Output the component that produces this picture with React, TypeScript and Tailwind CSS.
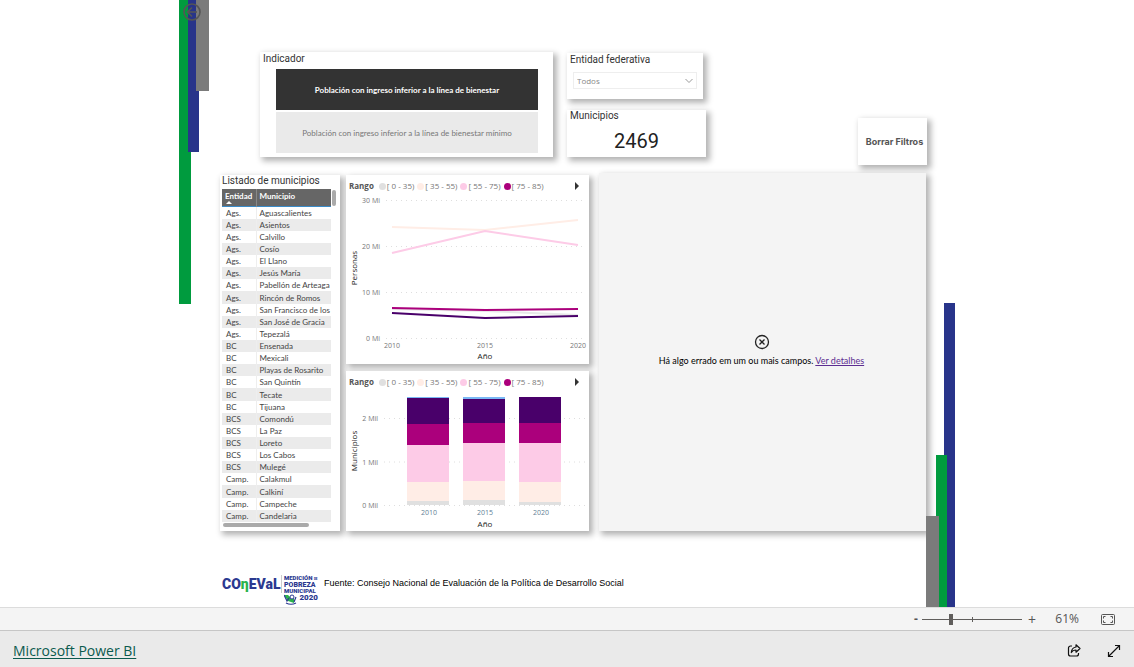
import { useState } from "react";

const MUNICIPIOS: [string, string][] = [
  ["Ags.", "Aguascalientes"],
  ["Ags.", "Asientos"],
  ["Ags.", "Calvillo"],
  ["Ags.", "Cosío"],
  ["Ags.", "El Llano"],
  ["Ags.", "Jesús María"],
  ["Ags.", "Pabellón de Arteaga"],
  ["Ags.", "Rincón de Romos"],
  ["Ags.", "San Francisco de los"],
  ["Ags.", "San José de Gracia"],
  ["Ags.", "Tepezalá"],
  ["BC", "Ensenada"],
  ["BC", "Mexicali"],
  ["BC", "Playas de Rosarito"],
  ["BC", "San Quintín"],
  ["BC", "Tecate"],
  ["BC", "Tijuana"],
  ["BCS", "Comondú"],
  ["BCS", "La Paz"],
  ["BCS", "Loreto"],
  ["BCS", "Los Cabos"],
  ["BCS", "Mulegé"],
  ["Camp.", "Calakmul"],
  ["Camp.", "Calkiní"],
  ["Camp.", "Campeche"],
  ["Camp.", "Candelaria"],
];

const RANGES = [
  { label: "[ 0 - 35)", dot: "bg-[#e0e0e0]" },
  { label: "[ 35 - 55)", dot: "bg-[#ffede6]" },
  { label: "[ 55 - 75)", dot: "bg-[#fdcbe7]" },
  { label: "[ 75 - 85)", dot: "bg-[#ab007c]" },
];

const LINES = [
  { color: "#e8e8e8", points: "46,112 139,114 232,118" },
  { color: "#ffede6", points: "46,30 139,33 232,23" },
  { color: "#fdcbe7", points: "46,56 139,34 232,48" },
  { color: "#ab007c", points: "46,111 139,113 232,112" },
  { color: "#49006a", points: "46,116 139,121 232,119" },
];

const BAR_COLORS = ["#7ab8f5", "#49006a", "#ab007c", "#fdcbe7", "#ffede6", "#e0e0e0"];

// edges of each stacked segment, top to bottom
const BARS = [
  { year: "2010", x: 61, edges: [4, 5, 31, 52, 89, 108, 112] },
  { year: "2015", x: 117, edges: [4, 6, 30, 50, 88, 107, 112] },
  { year: "2020", x: 173, edges: [4, 4, 30, 50, 89, 109, 112] },
];

const CARD = "bg-white shadow-[3px_3px_6px_1px_rgba(0,0,0,0.3)]";

function Legend() {
  return (
    <div className="flex h-[22px] items-center pl-[3px] pr-[10px] text-[8px] leading-none text-[#777]">
      <span className="mr-[5px] font-bold text-[#555]">Rango</span>
      <ul className="flex gap-[3px]">
        {RANGES.map((r) => (
          <li key={r.label} className="flex items-center gap-px whitespace-nowrap">
            <span className={`size-[7px] rounded-full ${r.dot}`} />
            {r.label}
          </li>
        ))}
      </ul>
      <button
        type="button"
        aria-label="Siguiente"
        className="ml-auto border-y-4 border-l-4 border-y-transparent border-l-[#333]"
      />
    </div>
  );
}

function GridLine({ y, x }: { y: number; x: number }) {
  return <line x1={x} x2={239} y1={y} y2={y} stroke="#dedede" strokeDasharray="1 4" />;
}

function LineChart() {
  return (
    <svg width="243" height="167" className="block text-[7px]" fill="#777" role="img" aria-label="Personas por año">
      {[30, 20, 10, 0].map((n, i) => (
        <g key={n}>
          <GridLine x={40} y={3.5 + i * 46} />
          <text x={34} y={6 + i * 46} textAnchor="end">{n} Mi</text>
        </g>
      ))}
      {LINES.map((l) => (
        <polyline key={l.color} points={l.points} fill="none" stroke={l.color} strokeWidth={2} />
      ))}
      {["2010", "2015", "2020"].map((y, i) => (
        <text key={y} x={46 + i * 93} y={151} textAnchor="middle">{y}</text>
      ))}
      <g className="text-[8px]" fill="#222" textAnchor="middle">
        <text x={139} y={162}>Año</text>
        <text transform="translate(11 71) rotate(-90)">Personas</text>
      </g>
    </svg>
  );
}

function BarChart() {
  return (
    <svg width="243" height="138" className="block text-[7px]" fill="#777" role="img" aria-label="Municipios por año">
      {[2, 1, 0].map((n, i) => (
        <g key={n}>
          <GridLine x={38} y={25.5 + i * 43.5} />
          <text x={32} y={28 + i * 43.5} textAnchor="end">{n} Mil</text>
        </g>
      ))}
      {BARS.map((b) => (
        <g key={b.year}>
          {BAR_COLORS.map((c, i) => (
            <rect key={c} x={b.x} y={b.edges[i]} width={42} height={b.edges[i + 1] - b.edges[i]} fill={c} />
          ))}
          <text x={b.x + 22} y={122} textAnchor="middle" fill="#5f7f96">{b.year}</text>
        </g>
      ))}
      <g className="text-[8px]" fill="#222" textAnchor="middle">
        <text x={139} y={134}>Año</text>
        <text transform="translate(11 58) rotate(-90)">Municipios</text>
      </g>
    </svg>
  );
}

function MunicipiosTable() {
  return (
    <section className={`w-[120px] shrink-0 pl-[2px] ${CARD}`}>
      <h2 className="h-[14px] whitespace-nowrap font-[Roboto,sans-serif] text-[10px] leading-[12px] text-[#333]">
        Listado de municipios
      </h2>
      <div className="flex gap-px">
        <table className="h-[333px] w-[109px] table-fixed text-left font-[Lato,sans-serif] text-[8px] leading-[10px] text-[#444]">
          <thead>
            <tr className="h-[17px] border-b border-[#3a8bc8] bg-[#666] align-top text-white">
              <th className="w-[34px] border-r border-[#888] pl-[3px] font-bold">
                <div className="pt-[3px] leading-[9px]">Entidad</div>
                <span className="ml-px block w-0 border-x-[3px] border-b-[3px] border-x-transparent border-b-white" />
              </th>
              <th className="pl-[3px] font-bold">
                <div className="pt-[3px] leading-[9px]">Municipio</div>
              </th>
            </tr>
          </thead>
          <tbody>
            {MUNICIPIOS.map(([entidad, municipio]) => (
              <tr key={municipio} className="even:bg-[#ebebeb]">
                <td className="border-r border-[#eee] pl-1">{entidad}</td>
                <td className="overflow-hidden whitespace-nowrap pl-[3px]">{municipio}</td>
              </tr>
            ))}
          </tbody>
        </table>
        <div className="mt-px h-4 w-1 rounded-sm bg-[#aaa]" />
      </div>
      <div className="ml-px mt-px h-1 w-[86px] rounded-sm bg-[#aaa]" />
    </section>
  );
}

function Logo() {
  return (
    <div className="flex items-start gap-[2px] font-[Roboto,sans-serif] font-black text-[#2b3990]">
      <div className="w-[57px] whitespace-nowrap pt-px text-[14px] leading-4">
        CO<span className="text-[#2bb34a]">η</span>EVaL
      </div>
      <div className="h-[18px] w-px bg-[#ccc]" />
      <div className="w-[34px] text-[6px] leading-[6px]">
        <div className="whitespace-nowrap">MEDICIÓN <span className="text-[3px]">DE</span></div>
        <div className="text-[7px]">POBREZA</div>
        <div>MUNICIPAL</div>
        <div className="flex items-start justify-between text-[8px] leading-[8px]">
          <svg width="14" height="11" viewBox="0 0 14 11" fill="none">
            <path d="M0 1H4L8 5L10 3L10 9L4 7Z" fill="#2bb34a" />
            <circle cx="8" cy="3" r="2" fill="#fff" stroke="#2b3990" />
            <path d="M0 1L3 7L5 4M12 3L10 8M2 9c3 1.500 7 1.500 10 0" stroke="#2b3990" strokeWidth="1.2" />
          </svg>
          2020
        </div>
      </div>
    </div>
  );
}

function ReportPage() {
  const [indicator, setIndicator] = useState(0);

  return (
    <div className="relative flex w-full max-w-[776px]">
      <div className="flex shrink-0 items-start">
        <div className="h-[304px] w-3 bg-[#009b3e]" />
        <div className="-ml-[3px] h-[152px] w-[11px] bg-[#28348a]" />
        <div className="-ml-[3px] h-[91px] w-[13px] bg-[#7b7b7b]" />
      </div>
      <button type="button" aria-label="Volver" className="absolute left-[4px] top-[3px] text-[#555]">
        <svg width="18" height="18" viewBox="0 0 18 18" fill="none" stroke="currentColor" strokeWidth="1.6">
          <circle cx="9" cy="9" r="8" />
          <path d="M14 9H4.500M9 4.500L4.500 9L9 13.500" />
        </svg>
      </button>

      <div className="flex min-w-0 flex-1 flex-col pl-[11px] pt-[52px]">
        <div className="flex items-start pl-10">
          <section className={`h-[105px] w-[293px] pl-[3px] ${CARD}`}>
            <h2 className="h-[17px] font-[Roboto,sans-serif] text-[10px] leading-[14px] text-[#333]">Indicador</h2>
            <div className="flex flex-col gap-[2px] pl-[13px] pr-[15px] font-[Lato,sans-serif] text-[8px]">
              {[
                "Población con ingreso inferior a la línea de bienestar",
                "Población con ingreso inferior a la línea de bienestar mínimo",
              ].map((label, i) => (
                <button
                  key={label}
                  type="button"
                  aria-pressed={indicator === i}
                  onClick={() => setIndicator(i)}
                  className={
                    indicator === i
                      ? "h-[41px] bg-[#333] font-bold text-white"
                      : "h-[41px] bg-[#eaeaea] text-[#777]"
                  }
                >
                  {label}
                </button>
              ))}
            </div>
          </section>

          <div className="ml-[14px] flex flex-col items-start gap-[11px] pt-px">
            <section className={`h-[46px] w-[136px] pl-[3px] ${CARD}`}>
              <label htmlFor="entidad" className="block h-[19px] font-[Roboto,sans-serif] text-[10px] leading-[14px] text-[#333]">
                Entidad federativa
              </label>
              <div className="relative ml-[3px] w-[124px]">
                <select
                  id="entidad"
                  className="block h-[17px] w-full appearance-none border border-[#eee] bg-white pl-[3px] text-[8px] leading-none text-[#888]"
                >
                  <option>Todos</option>
                </select>
                <svg className="pointer-events-none absolute right-1 top-[6px]" width="8" height="6" fill="none" stroke="#999">
                  <path d="M0.500 1L4 4.500L7.500 1" />
                </svg>
              </div>
            </section>
            <section className={`h-[47px] w-[139px] font-[Roboto,sans-serif] text-[#333] ${CARD}`}>
              <h2 className="h-[19px] pl-[3px] text-[10px] leading-[12px]">Municipios</h2>
              <p className="text-center text-[20px] leading-6 text-[#222]">2469</p>
            </section>
          </div>

          <button
            type="button"
            className={`-mr-px ml-auto mt-[66px] h-[47px] w-[69px] whitespace-nowrap pl-1 font-[Inter,sans-serif] text-[9px] font-bold text-[#555] ${CARD}`}
          >
            Borrar Filtros
          </button>
        </div>

        <div className="mt-2 flex h-[358px]">
          <div className="flex pt-[2px]">
            <MunicipiosTable />
          </div>
          <div className="ml-[6px] flex w-[243px] shrink-0 flex-col gap-[7px] pt-[2px]">
            <section className={CARD}>
              <Legend />
              <LineChart />
            </section>
            <section className={CARD}>
              <Legend />
              <BarChart />
            </section>
          </div>
          <section className="ml-[10px] flex flex-1 flex-col items-center justify-center bg-[#f4f4f4] pb-[2px] pr-[2px] shadow-[3px_3px_6px_1px_rgba(0,0,0,0.3)]">
            <svg width="16" height="16" viewBox="0 0 16 16" fill="none" stroke="#222" strokeWidth="1.3">
              <circle cx="8" cy="8" r="6.500" />
              <path d="M5.500 5.500l5 5M10.500 5.500l-5 5" />
            </svg>
            <p className="mt-1 whitespace-nowrap font-[Lato,sans-serif] text-[9px] leading-[14px] text-black">
              Há algo errado em um ou mais campos.{" "}
              <a href="#detalhes" className="text-[#5c2d91] underline">Ver detalhes</a>
            </p>
          </section>
        </div>

        <div className="mt-[44px] flex items-start gap-[6px] pl-[2px]">
          <Logo />
          <p className="font-['Liberation_Sans',sans-serif] text-[9px] leading-4 text-black">
            Fuente: Consejo Nacional de Evaluación de la Política de Desarrollo Social
          </p>
        </div>
      </div>

      <div className="flex shrink-0 items-end">
        <div className="z-20 h-[91px] w-[13px] bg-[#7b7b7b]" />
        <div className="z-10 -ml-[3px] h-[152px] w-[11px] bg-[#009b3e]" />
        <div className="-ml-[3px] h-[304px] w-[11px] bg-[#28348a]" />
      </div>
    </div>
  );
}

function ZoomBar() {
  const [zoom, setZoom] = useState(61);

  return (
    <div className="flex h-[23px] items-center justify-end border-t border-[#dcdcdc] bg-[#f4f4f4] pr-[19px] text-[12px] text-[#555]">
      <button type="button" aria-label="Reducir" className="w-3 font-bold" onClick={() => setZoom(zoom - 10)}>-</button>
      <div className="relative flex w-[100px] items-center">
        <input
          type="range"
          aria-label="Zoom"
          min={10}
          max={190}
          value={zoom}
          onChange={(e) => setZoom(Number(e.target.value))}
          className="h-3 w-full appearance-none bg-transparent [&::-webkit-slider-runnable-track]:h-px [&::-webkit-slider-runnable-track]:bg-[#605e5c] [&::-webkit-slider-thumb]:-mt-[5px] [&::-webkit-slider-thumb]:h-[11px] [&::-webkit-slider-thumb]:w-1 [&::-webkit-slider-thumb]:appearance-none [&::-webkit-slider-thumb]:bg-[#605e5c]"
        />
        <span className="pointer-events-none absolute left-1/2 h-[5px] w-px bg-[#605e5c]" />
      </div>
      <button type="button" aria-label="Ampliar" className="ml-1 w-3 text-[14px]" onClick={() => setZoom(zoom + 10)}>+</button>
      <span className="w-[41px] text-right">{zoom}%</span>
      <button type="button" aria-label="Ajustar a la página" className="ml-[22px]">
        <svg width="14" height="11" viewBox="0 0 14 11" fill="none" stroke="#555">
          <rect x="0.500" y="0.500" width="13" height="10" rx="1" />
          <path d="M2.500 4.500V2.500H4.500M9.500 2.500H11.500V4.500M11.500 6.500V8.500H9.500M4.500 8.500H2.500V6.500" />
        </svg>
      </button>
    </div>
  );
}

function BrandBar() {
  return (
    <footer className="flex h-[37px] items-center justify-between border-t border-[#c6c6c6] bg-[#eaeaea] px-[13px] pt-[3px]">
      <a href="#powerbi" className="text-[14px] text-[#0b5a4e] underline underline-offset-2">Microsoft Power BI</a>
      <div className="flex items-center gap-[26px]">
        <button type="button" aria-label="Compartir">
          <svg width="14" height="13" viewBox="0 0 14 13" fill="none" stroke="#111" strokeWidth="1.200" strokeLinejoin="round">
            <path d="M5 2H3.500A2 2 0 0 0 1.500 4V10A2 2 0 0 0 3.500 12H9.500A2 2 0 0 0 11.500 10V9" />
            <path d="M9 0.800L13 4.500L9 8.200V6C6.500 6 5.300 6.800 4.300 8.500C4.500 5.500 6 3.500 9 3Z" />
          </svg>
        </button>
        <button type="button" aria-label="Pantalla completa">
          <svg width="14" height="14" viewBox="0 0 14 14" fill="none" stroke="#111" strokeWidth="1.200">
            <path d="M1.500 12.500L12.500 1.500M8 1.500H12.500V6M1.500 8V12.500H6" />
          </svg>
        </button>
      </div>
    </footer>
  );
}

export default function App() {
  return (
    <div className="flex min-h-screen flex-col bg-white font-['Open_Sans',sans-serif]">
      <main className="flex flex-1 justify-center">
        <ReportPage />
      </main>
      <ZoomBar />
      <BrandBar />
    </div>
  );
}
